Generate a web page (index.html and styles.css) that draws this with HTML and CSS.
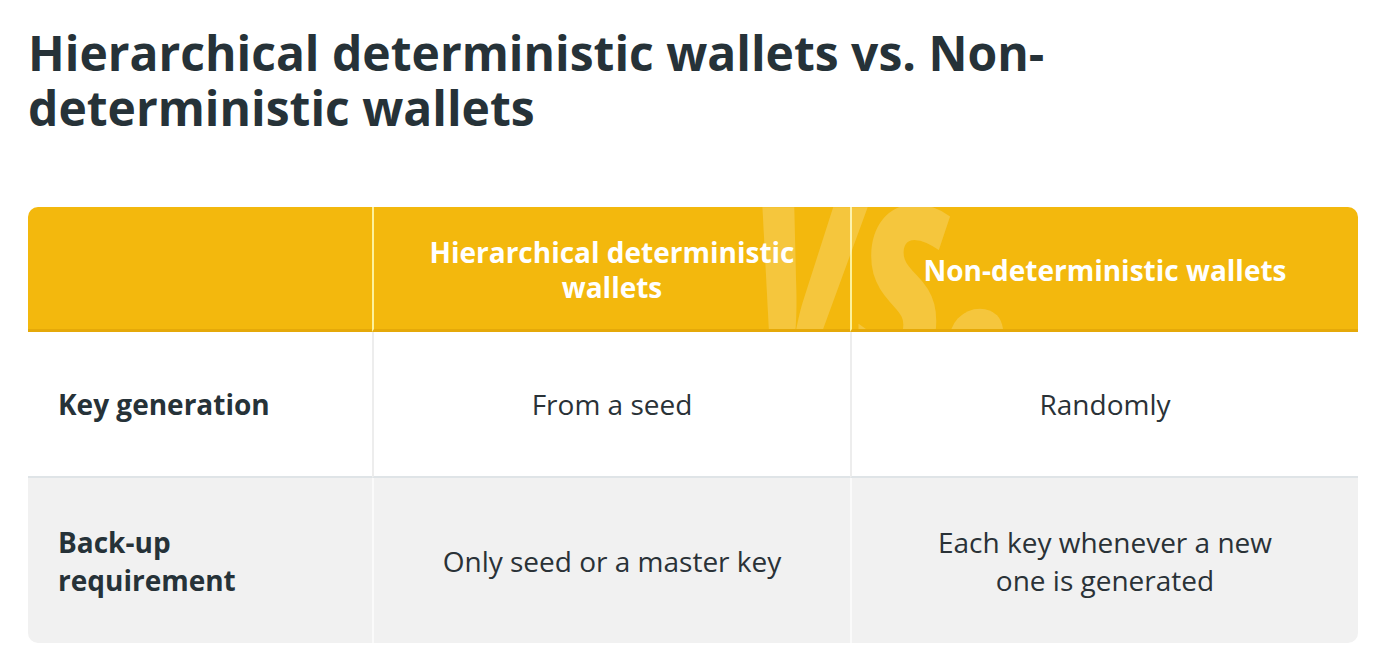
FILE: index.html
```html
<!DOCTYPE html>
<html lang="en">
<head>
<meta charset="utf-8">
<title>Hierarchical deterministic wallets vs. Non-deterministic wallets</title>
<link rel="stylesheet" href="styles.css">
</head>
<body>
<div class="page">
  <h1 class="title">Hierarchical deterministic wallets vs. Non-deterministic wallets</h1>
  <div class="cmp">
    <div class="cell head"></div>
    <div class="cell head sep">Hierarchical deterministic wallets</div>
    <div class="cell head sep">Non-deterministic wallets</div>

    <div class="cell label">Key generation</div>
    <div class="cell val sep">From a seed</div>
    <div class="cell val sep">Randomly</div>

    <div class="cell label alt">Back-up requirement</div>
    <div class="cell val sep alt">Only seed or a master key</div>
    <div class="cell val sep alt">Each key whenever a new one is generated</div>

    <div class="vs" aria-hidden="true"><span class="vs-text">V<span class="vs-s">S</span><span class="vs-dot">.</span></span></div>
  </div>
</div>
</body>
</html>
```

FILE: styles.css
```css
* { box-sizing: border-box; }

html, body {
  margin: 0;
  padding: 0;
  background: #ffffff;
}

body {
  font-family: "Open Sans", "Noto Sans", sans-serif;
  color: #263238;
}

.page {
  padding: 25px 23px 0 28px;
}

.title {
  margin: 0;
  max-width: 1120px;
  font-size: 48px;
  line-height: 55px;
  font-weight: 700;
  color: #263238;
}

.cmp {
  position: relative;
  margin-top: 72px;
  width: 1330px;
  display: grid;
  grid-template-columns: 344px 478px 508px;
  grid-template-rows: 125px 146px 165px;
  border-radius: 10px;
  overflow: hidden;
}

.cell {
  display: flex;
  align-items: center;
  justify-content: center;
  text-align: center;
  font-size: 28px;
  line-height: 38px;
}

.head {
  background: #f3b80d;
  border-bottom: 3px solid #e5a909;
  color: #ffffff;
  font-weight: 700;
  line-height: 35px;
  padding: 4px 40px 0;
}

.head.sep {
  border-left: 2px solid #fdf19a;
}

.label {
  justify-content: flex-start;
  text-align: left;
  font-weight: 700;
  padding: 0 30px;
  color: #263238;
}

.val {
  font-weight: 400;
  padding: 0 60px;
  color: #2a3237;
}

.val.sep {
  border-left: 2px solid #ededed;
}

.label, .val {
  background: #ffffff;
  border-bottom: 2px solid #dfe4e7;
}

.alt {
  background: #f1f1f1;
  border-bottom: 0;
}

.val.sep.alt {
  border-left-color: #fafafa;
}

.vs {
  position: absolute;
  left: 722px;
  top: 0;
  width: 340px;
  height: 122px;
  overflow: hidden;
  pointer-events: none;
}

.vs-text {
  position: absolute;
  left: 0;
  top: -39px;
  font-family: "Open Sans", sans-serif;
  font-style: italic;
  font-weight: 800;
  font-size: 230px;
  line-height: 230px;
  white-space: nowrap;
  color: rgba(255, 255, 255, 0.2);
  transform: scaleX(0.74);
  transform-origin: left top;
  letter-spacing: 0;
}

.vs-dot {
  font-size: 360px;
  line-height: 0;
}
```
